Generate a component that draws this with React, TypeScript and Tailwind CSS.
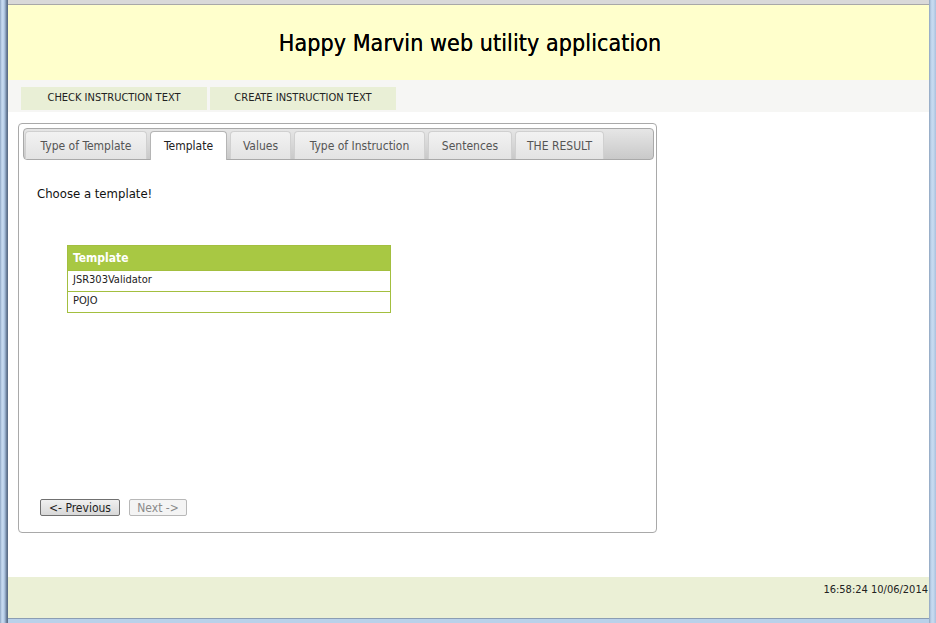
import React from "react";

const tabs = ["Type of Template", "Template", "Values", "Type of Instruction", "Sentences", "THE RESULT"];
const tabW = [123, 77, 61, 131, 84, 89];

export default function App() {
  const font = { fontFamily: '"DejaVu Sans Condensed", "DejaVu Sans", sans-serif' };
  return (
    <div className="w-[936px] h-[623px] flex bg-white overflow-hidden" style={font}>
      <div className="w-[8px] h-full bg-[linear-gradient(to_right,#8ea6c4_0px,#c9dcf1_2px,#b9d0ea_4px,#7f95b2_6px,#5d6f88_7px)]" />
      <div className="flex-1 flex flex-col">
        <div className="h-[5px] bg-[#d9d9d9] border-b border-[#a8a8a8]" />
        <div className="h-[75px] bg-[#ffffcc] flex items-center justify-center">
          <h1 className="text-[23px] text-black tracking-[0.1px] mt-[1px] ml-[3px] [text-shadow:0_0_0.4px_#000]">Happy Marvin web utility application</h1>
        </div>
        <div className="h-[32px] bg-[#f6f6f4] flex items-center gap-[3px] pl-[13px] pt-[4px]">
          <div className="w-[186px] h-[23px] bg-[#e9efd6] flex items-center justify-center text-[11px] text-[#222]">CHECK INSTRUCTION TEXT</div>
          <div className="w-[186px] h-[23px] bg-[#e9efd6] flex items-center justify-center text-[11px] text-[#222]">CREATE INSTRUCTION TEXT</div>
        </div>
        <div className="flex-1 pl-[10px] pt-[11px]">
          <div className="w-[639px] h-[410px] border border-[#a9a9a9] rounded-[4px] pt-[4px] pl-[4px] pr-[2px] pb-[4px] flex flex-col">
            <div className="h-[32px] rounded-[4px] border border-[#a9a9a9] bg-[linear-gradient(to_bottom,#e6e6e6,#c9c9c9)] flex items-end gap-[3px] pl-[1px]">
              {tabs.map((t, i) => (
                <div
                  key={t}
                  style={{ width: i === 0 ? 122 : tabW[i] }}
                  className={
                    i === 1
                      ? "h-[29px] -mb-px bg-white border border-b-0 border-[#b5b5b5] rounded-t-[4px] flex items-center justify-center text-[12px] text-[#222]"
                      : "h-[28px] bg-[linear-gradient(to_bottom,#f2f2f2,#e3e3e3)] border border-b-0 border-[#d0d0d0] rounded-t-[4px] flex items-center justify-center text-[12px] text-[#555]"
                  }
                >
                  {t}
                </div>
              ))}
            </div>
            <div className="flex-1 flex flex-col pl-[14px]">
              <p className="mt-[24px] text-[13px] text-[#111]">Choose a template!</p>
              <div className="ml-[30px] mt-[41px] w-[324px] border border-[#a3bf3f]">
                <div className="h-[25px] bg-[#a8c843] text-white font-bold text-[12px] flex items-center pl-[5px] border-b border-[#a3bf3f]">Template</div>
                <div className="h-[21px] text-[11px] text-[#222] flex items-center pl-[5px] border-b border-[#a3bf3f]">JSR303Validator</div>
                <div className="h-[20px] text-[11px] text-[#222] flex items-center pl-[5px]">POJO</div>
              </div>
              <div className="mt-auto mb-[12px] flex gap-[9px] ml-[3px]">
                <button className="w-[80px] h-[17px] border border-[#707070] rounded-[2px] bg-[linear-gradient(to_bottom,#f0f0f0,#d8d8d8)] text-[12px] text-[#222] leading-none">&lt;- Previous</button>
                <button className="w-[58px] h-[17px] border border-[#b8b8b8] rounded-[2px] bg-[#f4f4f4] text-[12px] text-[#8a8a8a] leading-none">Next -&gt;</button>
              </div>
            </div>
          </div>
        </div>
        <div className="h-[41px] bg-[#ebf0d6] flex justify-end pr-[1px] pt-[5px]">
          <span className="text-[11px] text-[#222]">16:58:24 10/06/2014</span>
        </div>
        <div className="h-[5px] bg-[#b9d1ea] border-t border-[#8b9db3]" />
      </div>
      <div className="w-[7px] h-full bg-[linear-gradient(to_right,#8ea3bd_0px,#bcd2ea_2px,#c9dcf1_4px,#a9c0dc_7px)]" />
    </div>
  );
}
